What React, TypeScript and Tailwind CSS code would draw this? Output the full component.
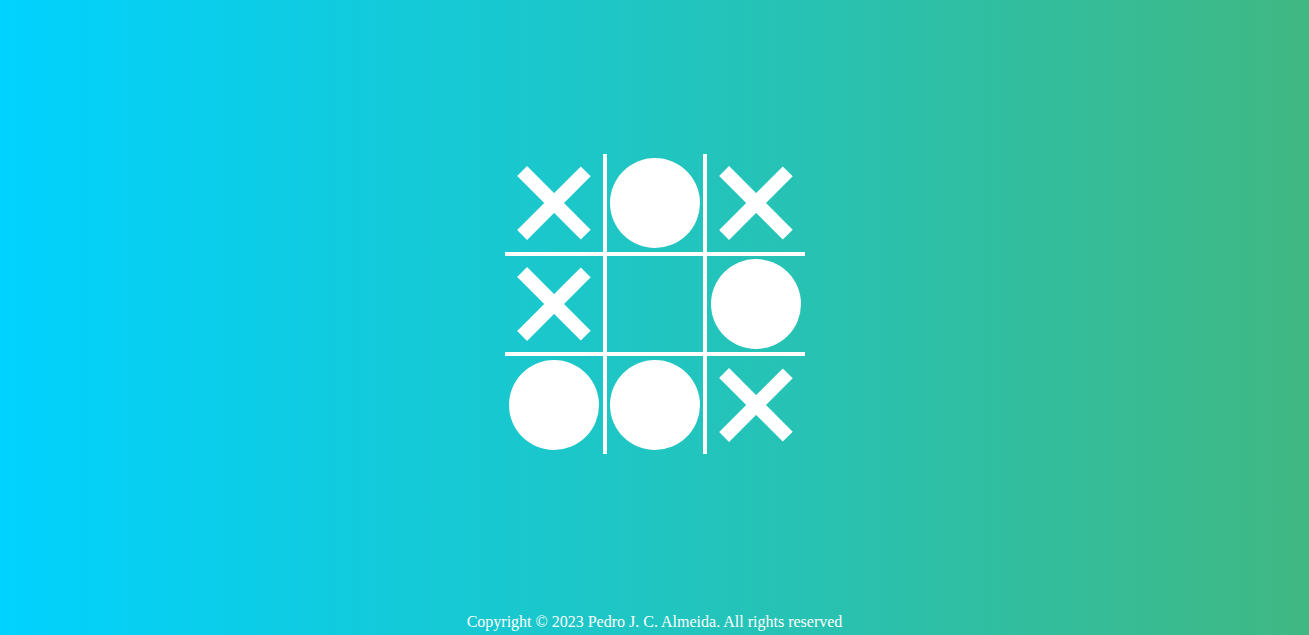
import React from 'react';

type Mark = 'x' | 'o' | '';

const board: Mark[] = ['x', 'o', 'x', 'x', '', 'o', 'o', 'o', 'x'];

const Cell = ({ mark, index }: { mark: Mark; index: number }) => {
  const col = index % 3;
  const row = Math.floor(index / 3);
  const borders = [
    col > 0 ? 'border-l-2' : '',
    col < 2 ? 'border-r-2' : '',
    row > 0 ? 'border-t-2' : '',
    row < 2 ? 'border-b-2' : '',
  ].join(' ');

  return (
    <div
      className={`relative flex h-[100px] w-[100px] items-center justify-center border-white ${borders}`}
    >
      {mark === 'x' && (
        <>
          <span className="absolute h-[90px] w-[13.5px] rotate-45 bg-white" />
          <span className="absolute h-[90px] w-[13.5px] -rotate-45 bg-white" />
        </>
      )}
      {mark === 'o' && <span className="h-[90px] w-[90px] shrink-0 rounded-full bg-white" />}
    </div>
  );
};

const App = () => {
  return (
    <div className="flex min-h-screen flex-col bg-[linear-gradient(to_right,#00d2ff,#40b883)] font-['Liberation_Serif',serif]">
      <main className="flex flex-1 items-center justify-center">
        <div className="grid grid-cols-[repeat(3,100px)]">
          {board.map((mark, i) => (
            <Cell key={i} mark={mark} index={i} />
          ))}
        </div>
      </main>

      {/* Footer */}
      <footer className="flex h-[27px] items-center justify-center text-base text-white">
        Copyright © 2023 Pedro J. C. Almeida. All rights reserved
      </footer>
    </div>
  );
};

export default App;
